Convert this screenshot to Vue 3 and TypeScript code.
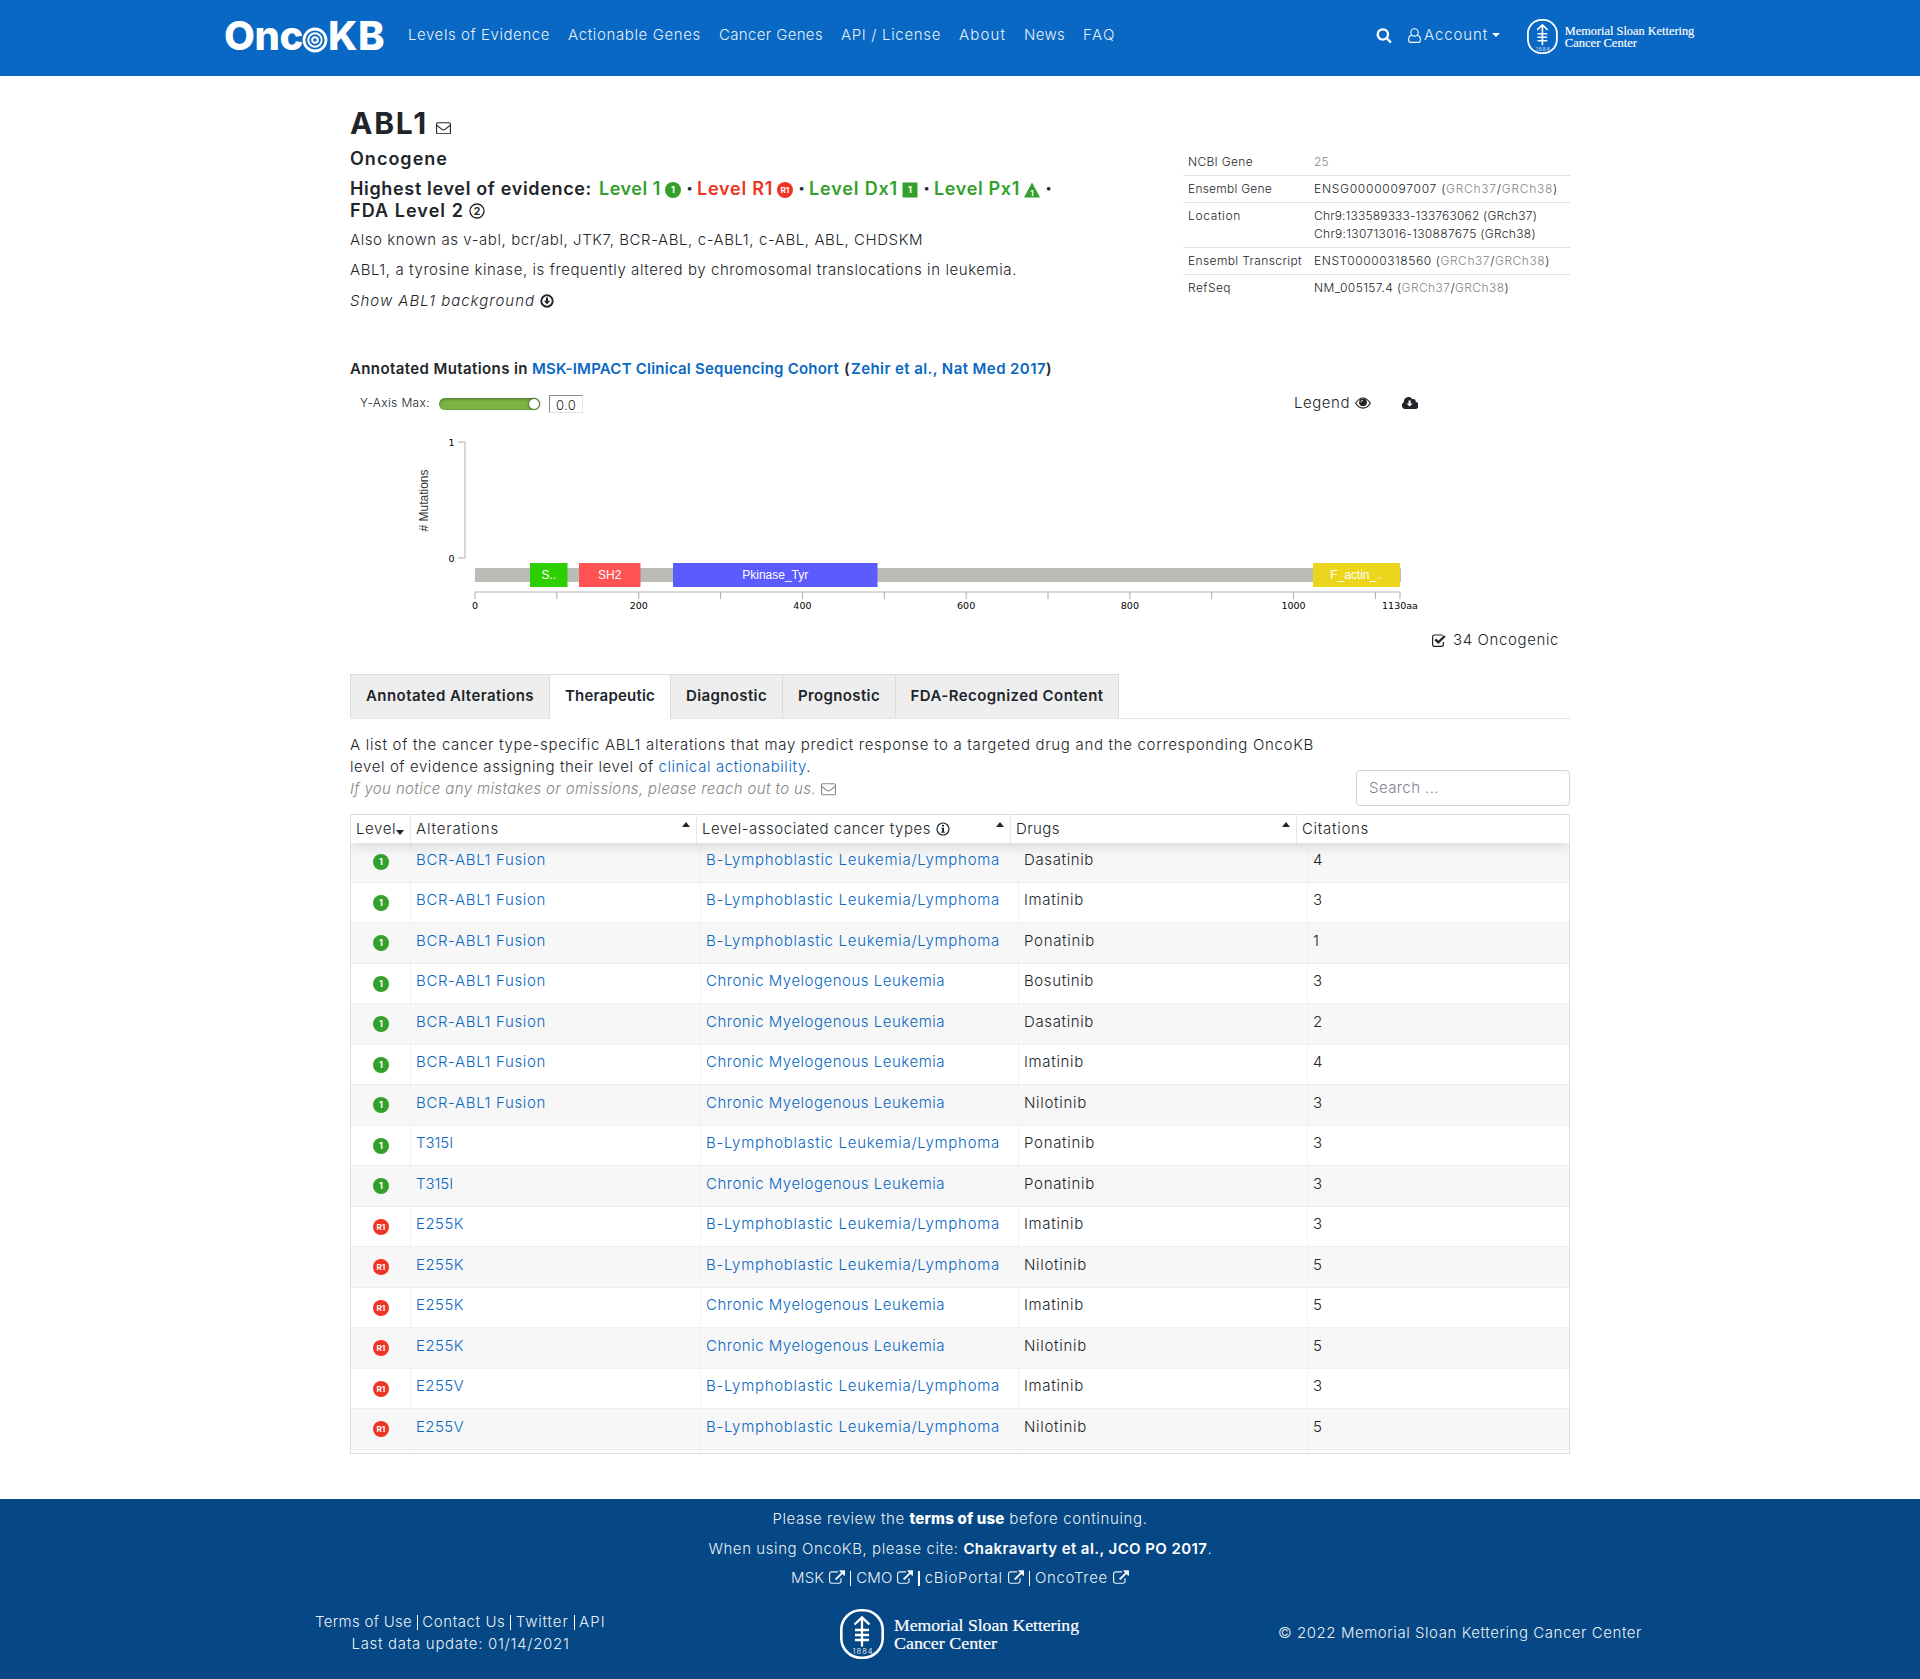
<script setup lang="ts">
import { h, type Directive, type FunctionalComponent } from 'vue'

interface Row {
  level: '1' | 'R1'
  alteration: string
  cancer: string
  drug: string
  citations: number
}

// Tracks a label out (or in) until it fills the given width.
const vFit: Directive<HTMLElement, number> = {
  mounted(el, { value }) {
    el.style.display = 'inline-block'
    el.style.whiteSpace = 'pre'
    const count = (el.textContent ?? '').length
    const natural = el.getBoundingClientRect().width
    el.style.letterSpacing = `${(value - natural) / count}px`
  },
}

const Envelope: FunctionalComponent = () =>
  h('svg', { viewBox: '0 0 16 13', width: 15, height: 12.5, fill: 'none', stroke: 'currentColor', 'stroke-width': 1.15 }, [
    h('rect', { x: 0.6, y: 0.6, width: 14.8, height: 11.8, rx: 1.4 }),
    h('path', { d: 'M.8 3.2c2 1.9 3.700 3 5.300 4.400 1.400 1.100 2.400 1.100 3.800 0 1.600-1.400 3.300-2.500 5.300-4.400' }),
  ])

const Level: FunctionalComponent<{ kind: string }> = ({ kind }) => {
  const label = (x: number, y: number, size: number, text: string, fill = '#fff') =>
    h('text', { x, y, 'font-size': size, 'font-weight': 700, fill, 'text-anchor': 'middle', 'font-family': 'Inter, sans-serif' }, text)
  const shapes: Record<string, unknown[]> = {
    '1': [h('circle', { cx: 8, cy: 8, r: 8, fill: '#33a02c' }), label(8, 11.2, 9, '1')],
    R1: [h('circle', { cx: 8, cy: 8, r: 8, fill: '#ee3424' }), label(7.9, 11, 8.2, 'R1')],
    Dx: [h('rect', { x: 0.5, y: 0.5, width: 15, height: 15, fill: '#33a02c' }), label(8, 11.2, 9, '1')],
    Px: [h('path', { d: 'M8 0.500 16 15.500H0Z', fill: '#33a02c' }), label(8, 13.5, 8, '1')],
    F2: [h('circle', { cx: 8, cy: 8, r: 7, fill: 'none', stroke: '#212529', 'stroke-width': 1.3 }), label(8, 11.8, 10.5, '2', '#212529')],
  }
  return h('svg', { viewBox: '0 0 16 16', width: 16, height: 16 }, shapes[kind] as any)
}

const External: FunctionalComponent = () =>
  h('svg', { viewBox: '0 0 1792 1540', width: 16, height: 14, fill: 'currentColor', class: 'external' }, [
    h('path', {
      d: 'M1408 928v320q0 119-84.500 203.500T1120 1536H288q-119 0-203.500-84.500T0 1248V416q0-119 84.500-203.500T288 128h704q14 0 23 9t9 23v64q0 14-9 23t-23 9H288q-66 0-113 47t-47 113v832q0 66 47 113t113 47h832q66 0 113-47t47-113V928q0-14 9-23t23-9h64q14 0 23 9t9 23zm384-864v512q0 26-19 45t-45 19-45-19l-176-176-652 652q-10 10-23 10t-23-10L695 983q-10-10-10-23t10-23l652-652-176-176q-19-19-19-45t19-45 45-19h512q26 0 45 19t19 45z',
    }),
  ])

const MskLogo: FunctionalComponent<{ width: number; height: number }> = ({ width, height }) =>
  h('svg', { viewBox: '0 0 240 50', width, height }, [
    h('rect', { x: 1.3, y: 1.3, width: 41.4, height: 47.4, rx: 19.5, fill: 'none', stroke: '#fff', 'stroke-width': 2.6 }),
    h('path', {
      d: 'M22 8V37.500M14.500 15.500 22 8.300 29.500 15.500M15 21h14M15 26h14M15 31h14',
      fill: 'none', stroke: '#fff', 'stroke-width': 2.3,
    }),
    h('text', { x: 12.5, y: 45, 'font-size': 7.5, fill: '#fff', 'font-family': 'Inter, sans-serif', textLength: 20 }, '1884'),
    h('text', { x: 54, y: 22.4, 'font-size': 17, fill: '#fff', stroke: '#fff', 'stroke-width': 0.2, 'font-family': '"Liberation Serif", serif', textLength: 185, lengthAdjust: 'spacingAndGlyphs' }, 'Memorial Sloan Kettering'),
    h('text', { x: 54, y: 40.2, 'font-size': 17, fill: '#fff', stroke: '#fff', 'stroke-width': 0.2, 'font-family': '"Liberation Serif", serif', textLength: 103, lengthAdjust: 'spacingAndGlyphs' }, 'Cancer Center'),
  ])

const nav = [
  { text: 'Levels of Evidence', w: 142 },
  { text: 'Actionable Genes', w: 133 },
  { text: 'Cancer Genes', w: 104 },
  { text: 'API / License', w: 100 },
  { text: 'About', w: 47 },
  { text: 'News', w: 41 },
  { text: 'FAQ', w: 33 },
]

const tabs = [
  { text: 'Annotated Alterations', w: 168, box: 198 },
  { text: 'Therapeutic', w: 90, box: 121 },
  { text: 'Diagnostic', w: 81, box: 112 },
  { text: 'Prognostic', w: 82, box: 113 },
  { text: 'FDA-Recognized Content', w: 193, box: 223 },
]

const B = 'B-Lymphoblastic Leukemia/Lymphoma'
const C = 'Chronic Myelogenous Leukemia'
const fusion = 'BCR-ABL1 Fusion'
const row = (level: '1' | 'R1', alteration: string, cancer: string, drug: string, citations: number): Row =>
  ({ level, alteration, cancer, drug, citations })

const rows: Row[] = [
  row('1', fusion, B, 'Dasatinib', 4),
  row('1', fusion, B, 'Imatinib', 3),
  row('1', fusion, B, 'Ponatinib', 1),
  row('1', fusion, C, 'Bosutinib', 3),
  row('1', fusion, C, 'Dasatinib', 2),
  row('1', fusion, C, 'Imatinib', 4),
  row('1', fusion, C, 'Nilotinib', 3),
  row('1', 'T315I', B, 'Ponatinib', 3),
  row('1', 'T315I', C, 'Ponatinib', 3),
  row('R1', 'E255K', B, 'Imatinib', 3),
  row('R1', 'E255K', B, 'Nilotinib', 5),
  row('R1', 'E255K', C, 'Imatinib', 5),
  row('R1', 'E255K', C, 'Nilotinib', 5),
  row('R1', 'E255V', B, 'Imatinib', 3),
  row('R1', 'E255V', B, 'Nilotinib', 5),
]

const widths: Record<string, number> = {
  [B]: 294, [C]: 239, [fusion]: 130, T315I: 37, E255K: 48, E255V: 48,
  Dasatinib: 70, Imatinib: 60, Ponatinib: 71, Bosutinib: 70, Nilotinib: 63,
}

const scale = 925 / 1130
const px = (aa: number) => 125 + aa * scale
const ticks = [0, 100, 200, 300, 400, 500, 600, 700, 800, 900, 1000, 1100, 1130]
const tickLabels = [0, 200, 400, 600, 800, 1000, 1130]
const domains = [
  { x: 180, w: 37.5, label: 'S..', fill: '#2dcf00' },
  { x: 229, w: 61.5, label: 'SH2', fill: '#ff5353' },
  { x: 323, w: 204.5, label: 'Pkinase_Tyr', fill: '#5b5bff' },
  { x: 963, w: 87, label: 'F_actin_..', fill: '#ebd61d' },
]
</script>

<template>
  <div class="page">
    <header class="top">
      <div class="brand">
        <span v-fit="79">Onc</span>
        <svg width="26" height="26" viewBox="0 0 26 26" fill="none" stroke="#fff">
          <circle cx="13" cy="13" r="11" stroke-width="2.800" />
          <circle cx="13" cy="13" r="6.700" stroke-width="2" />
          <circle cx="13" cy="13" r="2.800" stroke-width="2" />
        </svg>
        <span v-fit="57">KB</span>
      </div>
      <nav>
        <a v-for="n in nav" :key="n.text"><span v-fit="n.w">{{ n.text }}</span></a>
      </nav>
      <div class="account">
        <svg class="search-icon" width="16" height="16" viewBox="0 0 1792 1792" fill="#fff">
          <path d="M1216 832q0-185-131.500-316.500T768 384 451.500 515.500 320 832t131.500 316.500T768 1280t316.500-131.500T1216 832zm512 832q0 52-38 90t-90 38q-54 0-90-38l-343-342q-179 124-399 124-143 0-273.500-55.500t-225-150-150-225T64 832t55.500-273.500 150-225 225-150T768 128t273.500 55.500 225 150 150 225T1472 832q0 220-124 399l343 343q37 37 37 90z" />
        </svg>
        <svg class="user-icon" width="13" height="15" viewBox="0 0 13 15" fill="none" stroke="#fff" stroke-width="1.100">
          <path d="M3.600 7.200C1.500 7.500.6 9.500.6 12c0 1.500.8 2.400 2 2.400h7.800c1.200 0 2-.9 2-2.400 0-2.500-.9-4.500-3-4.800" />
          <circle cx="6.500" cy="4.400" r="3.700" />
        </svg>
        <span v-fit="64">Account</span>
        <i class="caret"></i>
      </div>
      <MskLogo :width="168" :height="35" />
    </header>

    <main>
      <section class="gene">
        <div class="info">
          <h1><span v-fit="78">ABL1</span><Envelope /></h1>
          <div class="h5"><span v-fit="98">Oncogene</span></div>
          <div class="h5 levels">
            <span class="lead" v-fit="242">Highest level of evidence:</span>
            <span class="green" v-fit="62">Level 1</span><Level kind="1" /><b>·</b>
            <span class="red" v-fit="76">Level R1</span><Level kind="R1" /><b>·</b>
            <span class="green" v-fit="89">Level Dx1</span><Level kind="Dx" /><b>·</b>
            <span class="green" v-fit="86">Level Px1</span><Level kind="Px" /><b>·</b>
          </div>
          <div class="h5 levels fda"><span v-fit="114">FDA Level 2</span><Level kind="F2" /></div>
          <p><span v-fit="573">Also known as v-abl, bcr/abl, JTK7, BCR-ABL, c-ABL1, c-ABL, ABL, CHDSKM</span></p>
          <p><span v-fit="667">ABL1, a tyrosine kinase, is frequently altered by chromosomal translocations in leukemia.</span></p>
          <p class="show">
            <em v-fit="185">Show ABL1 background</em>
            <svg width="14" height="14" viewBox="0 0 14 14">
              <circle cx="7" cy="7" r="5.700" fill="none" stroke="#212529" stroke-width="1.900" />
              <path d="M6 3.500h2v3.300h2.200L7 10.400 3.800 6.800H6z" fill="#212529" />
            </svg>
          </p>
        </div>
        <table class="refs">
          <tbody>
            <tr><td><span v-fit="65">NCBI Gene</span></td><td><a v-fit="15">25</a></td></tr>
            <tr><td><span v-fit="84">Ensembl Gene</span></td><td><span v-fit="244">ENSG00000097007 (<a>GRCh37</a>/<a>GRCh38</a>)</span></td></tr>
            <tr>
              <td><span v-fit="53">Location</span></td>
              <td><span v-fit="223">Chr9:133589333-133763062 (GRch37)</span><br /><span v-fit="222">Chr9:130713016-130887675 (GRch38)</span></td>
            </tr>
            <tr><td><span v-fit="114">Ensembl Transcript</span></td><td><span v-fit="236">ENST00000318560 (<a>GRCh37</a>/<a>GRCh38</a>)</span></td></tr>
            <tr><td><span v-fit="43">RefSeq</span></td><td><span v-fit="195">NM_005157.4 (<a>GRCh37</a>/<a>GRCh38</a>)</span></td></tr>
          </tbody>
        </table>
      </section>

      <h2 class="cohort"><span v-fit="182">Annotated Mutations in </span><a v-fit="307">MSK-IMPACT Clinical Sequencing Cohort</a><span v-fit="12"> (</span><a v-fit="195">Zehir et al., Nat Med 2017</a><span>)</span></h2>

      <div class="controls">
        <span class="small" v-fit="70">Y-Axis Max:</span>
        <span class="slider"><i></i></span>
        <span class="number"><span v-fit="20">0.0</span></span>
        <span class="legend" v-fit="56">Legend</span>
        <svg width="16" height="12" viewBox="0 0 16 12">
          <path d="M.7 6.300Q3.800 1 8 1t7.300 5.300Q12.200 11.200 8 11.200T.7 6.300Z" fill="none" stroke="#212529" stroke-width="1.200" />
          <circle cx="8" cy="5.300" r="3.900" fill="#212529" />
          <path d="M5.900 5.300A2.100 2.100 0 0 1 8 3.200" fill="none" stroke="#fff" stroke-width=".8" />
        </svg>
        <svg class="cloud" width="16" height="12" viewBox="0 0 16 12">
          <path d="M3.600 12A3.600 3.600 0 0 1 2.100 5.100 4.400 4.400 0 0 1 10.300 2.300 2.300 2.300 0 0 1 13.600 5 3.500 3.500 0 0 1 12.700 12Z" fill="#212529" />
          <path d="M6.600 3.500h2v3h2L7.600 9.600 4.600 6.500h2z" fill="#fff" />
        </svg>
      </div>

      <svg class="chart" width="1220" height="200" viewBox="0 420 1220 200">
        <path d="M108 442h7v116h-7" fill="none" stroke="#ccc" stroke-width="1.500" />
        <g class="tick">
          <text x="104.500" y="446" text-anchor="end">1</text>
          <text x="104.500" y="562" text-anchor="end">0</text>
        </g>
        <text class="axis" transform="translate(78 500.500) rotate(-90)" text-anchor="middle">
          # Mutations
        </text>
        <rect x="125" y="568" width="926" height="14" fill="#babdb6" />
        <g v-for="d in domains" :key="d.label">
          <rect :x="d.x" y="563" :width="d.w" height="24" :fill="d.fill" />
          <text class="domain" :x="d.x + d.w / 2" y="579" text-anchor="middle">{{ d.label }}</text>
        </g>
        <path d="M125 592H1050" stroke="#ccc" stroke-width="1.500" />
        <path v-for="t in ticks" :key="t" :d="`M${px(t)} 592v7`" stroke="#aaa" />
        <g class="tick">
          <text v-for="t in tickLabels" :key="t" :x="px(t)" y="609" text-anchor="middle">{{ t === 1130 ? '1130aa' : t }}</text>
        </g>
      </svg>

      <div class="oncogenic">
        <svg width="15" height="13" viewBox="0 0 15 13" fill="none" stroke="#212529">
          <path d="M11.400 8v2.400a1.900 1.900 0 0 1-1.900 1.900h-7A1.900 1.900 0 0 1 .6 10.400v-7.500A1.900 1.900 0 0 1 2.500 1h7c.5 0 .9.100 1.200.4" stroke-width="1.200" />
          <path d="m3.300 5.300 3 3.100 6.500-6.400" stroke-width="2.400" />
        </svg>
        <span v-fit="106">34 Oncogenic</span>
      </div>

      <ul class="tabs">
        <li v-for="(t, i) in tabs" :key="t.text" :class="{ active: i === 1 }" :style="{ width: t.box + 'px' }">
          <span v-fit="t.w">{{ t.text }}</span>
        </li>
      </ul>

      <div class="intro">
        <div class="copy">
          <div><span v-fit="964">A list of the cancer type-specific ABL1 alterations that may predict response to a targeted drug and the corresponding OncoKB</span></div>
          <div><span v-fit="461">level of evidence assigning their level of <a>clinical actionability</a>.</span></div>
          <div class="note"><em v-fit="466">If you notice any mistakes or omissions, please reach out to us.</em><Envelope /></div>
        </div>
        <div class="search"><span v-fit="70">Search ...</span></div>
      </div>

      <div class="grid">
        <div class="head">
          <div class="c1"><span v-fit="40">Level</span><i class="down"></i></div>
          <div class="c2"><span v-fit="83">Alterations</span><i class="up"></i></div>
          <div class="c3">
            <span v-fit="229">Level-associated cancer types</span>
            <svg width="14" height="14" viewBox="0 0 14 14">
              <circle cx="7" cy="7" r="6" fill="none" stroke="#212529" stroke-width="1.200" />
              <path d="M6 2.900h2v1.600H6zM5.400 5.700H8v4h.8v1H5.300v-1h.8v-3h-.7z" fill="#212529" />
            </svg>
            <i class="up"></i>
          </div>
          <div class="c4"><span v-fit="44">Drugs</span><i class="up"></i></div>
          <div class="c5"><span v-fit="67">Citations</span></div>
        </div>
        <div class="body">
          <div v-for="(r, i) in rows" :key="i" class="row">
            <div class="b1"><Level :kind="r.level" /></div>
            <div class="b2"><a v-fit="widths[r.alteration]">{{ r.alteration }}</a></div>
            <div class="b3"><a v-fit="widths[r.cancer]">{{ r.cancer }}</a></div>
            <div class="b4"><span v-fit="widths[r.drug]">{{ r.drug }}</span></div>
            <div class="b5">{{ r.citations }}</div>
          </div>
          <div class="row rest"><div class="b1"></div><div class="b2"></div><div class="b3"></div><div class="b4"></div><div class="b5"></div></div>
        </div>
      </div>
    </main>

    <footer>
      <div class="line"><span v-fit="137">Please review the </span><b class="heavy" v-fit="95">terms of use</b><span v-fit="143"> before continuing.</span></div>
      <div class="line"><span v-fit="255">When using OncoKB, please cite: </span><b v-fit="244">Chakravarty et al., JCO PO 2017</b><span>.</span></div>
      <div class="line links">
        <span v-fit="33">MSK</span><External /><i></i>
        <span v-fit="36">CMO</span><External /><i></i>
        <span v-fit="78">cBioPortal</span><External /><i></i>
        <span v-fit="73">OncoTree</span><External />
      </div>
      <div class="bottom">
        <div class="left">
          <div class="links">
            <span v-fit="97">Terms of Use</span><i></i><span v-fit="83">Contact Us</span><i></i><span v-fit="53">Twitter</span><i></i><span v-fit="27">API</span>
          </div>
          <div><span v-fit="218">Last data update: 01/14/2021</span></div>
        </div>
        <MskLogo :width="240" :height="50" />
        <div class="right"><span v-fit="364">© 2022 Memorial Sloan Kettering Cancer Center</span></div>
      </div>
    </footer>
  </div>
</template>

<style>
body {
  margin: 0;
  background: #fff;
}
</style>

<style scoped>
.page {
  width: 1920px;
  height: 1679px;
  display: flex;
  flex-direction: column;
  overflow: hidden;
  font: 350 15px/22px Inter, sans-serif;
  color: #212529;
}
svg {
  display: block;
  flex: none;
}
a {
  color: #0968c3;
}
.top {
  box-sizing: border-box;
  height: 76px;
  padding-left: 224px;
  display: flex;
  align-items: flex-start;
  background: #0968c3;
  color: rgba(255, 255, 255, 0.92);
}
.top a {
  color: inherit;
}
.brand {
  display: flex;
  width: 184px;
  height: 76px;
  color: #fff;
  font: 800 40px/48px Inter, sans-serif;
}
.brand > * {
  margin-top: 12px;
}
.brand svg {
  margin: 26.500px 0 0 -1px;
}
nav {
  display: flex;
  gap: 18px;
  width: 968px;
  margin-top: 24px;
}
.account {
  display: flex;
  width: 151px;
  margin-top: 24px;
}
.search-icon {
  margin: 2.500px 16px 0 0;
}
.user-icon {
  margin: 3.500px 3px 0 0;
}
.caret {
  margin: 8.500px 0 0 4px;
  height: 0;
  border: 4.500px solid transparent;
  border-top-color: #fff;
  border-bottom: 0;
}
.top > svg {
  margin-top: 19px;
}

main {
  width: 1220px;
  margin-left: 350px;
}
.gene {
  display: flex;
  justify-content: space-between;
  height: 282px;
}
h1 {
  display: flex;
  margin: 29px 0 6.500px;
  font: 700 30px/36px Inter, sans-serif;
}
h1 svg {
  margin: 16.500px 0 0 8px;
}
.h5 {
  height: 22px;
  font: 600 18px/22px Inter, sans-serif;
}
.levels {
  display: flex;
  margin-top: 8px;
}
.fda {
  margin-top: 0;
}
.levels svg {
  margin: 4.500px 0 0 4px;
}
.fda svg {
  margin: 3.500px 0 0 5px;
}
.lead {
  margin-right: 7px;
}
.levels b {
  width: 15px;
  margin-left: 1px;
  text-align: center;
}
.green {
  color: #33a02c;
}
.red {
  color: #ee3424;
}
p {
  margin: 7.500px 0 8px;
  height: 22px;
  display: flex;
}
p + p {
  margin-top: 8px;
}
.show {
  margin-top: 8.500px;
}
.show svg {
  margin: 4px 0 0 5px;
}
.refs {
  align-self: flex-start;
  width: 387px;
  margin: 73px 0 0;
  border-collapse: collapse;
  font-size: 12px;
  line-height: 18px;
}
.refs td {
  padding: 4px 5px;
  vertical-align: top;
}
.refs td:first-child {
  width: 116px;
}
.refs tr + tr {
  border-top: 1px solid #dee2e6;
}
.refs a {
  color: #868686;
}
.cohort {
  margin: 0;
  font: 600 15px/22px Inter, sans-serif;
}
.controls {
  display: flex;
  height: 28px;
  padding: 12px 0 0 10px;
}
.small {
  font-size: 12px;
}
.slider {
  width: 101px;
  height: 12px;
  margin: 6px 9px 0 9px;
  border-radius: 6px;
  background: #7cb342;
  box-shadow: inset 0 1px 3px rgba(0, 0, 0, 0.4);
  display: flex;
  justify-content: flex-end;
}
.slider i {
  width: 10px;
  height: 10px;
  margin: 1px;
  border-radius: 50%;
  background: #fff;
  box-shadow: 0 0 3px rgba(0, 0, 0, 0.7);
}
.number {
  box-sizing: border-box;
  width: 34px;
  height: 18px;
  margin: 3px 711px 0 0;
  padding-left: 6px;
  border: 1px solid;
  border-color: #8a8a8a #e4e4e4 #e4e4e4 #8a8a8a;
  font-size: 13px;
  line-height: 18px;
}
.legend {
  margin-right: 5px;
}
.controls svg {
  margin-top: 5px;
}
.controls .cloud {
  margin: 4.500px 0 0 31px;
}
.tick {
  font: 9.500px "DejaVu Sans", sans-serif;
}
.axis,
.domain {
  font: 12px "Liberation Sans", sans-serif;
  fill: #2e3436;
}
.domain {
  fill: #fff;
}
.oncogenic {
  display: flex;
  height: 45px;
  padding: 9px 0 0 1082px;
  gap: 6px;
}
.oncogenic svg {
  margin-top: 4.500px;
}
.tabs {
  display: flex;
  box-sizing: border-box;
  height: 45px;
  margin: 0;
  padding: 0;
  list-style: none;
  border-bottom: 1px solid #dee2e6;
}
.tabs li {
  box-sizing: border-box;
  height: 44px;
  padding-top: 10px;
  border: solid #dcdcdc;
  border-width: 1px 1px 0 0;
  background: #eee;
  font-weight: 600;
  text-align: center;
}
.tabs li:first-child {
  border-left-width: 1px;
  box-sizing: content-box;
  height: 33px;
}
.tabs li.active {
  height: 45px;
  background: #fff;
}
.intro {
  display: flex;
  justify-content: space-between;
  height: 95px;
}
.copy {
  padding-top: 14.500px;
}
.note {
  display: flex;
  margin-top: 0.500px;
  color: #868686;
}
.note svg {
  margin: 5px 0 0 5px;
}
.search {
  box-sizing: border-box;
  width: 214px;
  height: 36px;
  margin-top: 51px;
  padding: 5.500px 12px;
  border: 1px solid #ced4da;
  border-radius: 4px;
  color: #7b838a;
}
.grid {
  box-sizing: border-box;
  height: 640px;
  border: 1px solid #dedede;
  overflow: hidden;
}
.head {
  display: flex;
  height: 28px;
  position: relative;
  background: #fff;
  box-shadow: 0 2px 15px rgba(0, 0, 0, 0.15);
}
.head > div {
  box-sizing: border-box;
  display: flex;
  padding: 2.500px 6px 0 5px;
  border-right: 1px solid #e8e8e8;
}
.head .c1 { width: 60px; padding-right: 0; }
.head .c2 { width: 286px; }
.head .c3 { width: 314px; }
.head .c4 { width: 286px; }
.head .c5 { flex: 1; border: 0; }
.c3 svg {
  margin: 4px 0 0 5px;
}
.up,
.down {
  height: 0;
  border: 4.500px solid transparent;
}
.up {
  margin: 4px 0 0 auto;
  border-top: 0;
  border-bottom: 5px solid #212529;
}
.down {
  margin-top: 12.500px;
  border-bottom: 0;
  border-top: 5px solid #212529;
}
.body {
  margin-top: -1px;
}
.row {
  display: flex;
  box-sizing: border-box;
  height: 40.500px;
  border-bottom: 1px solid #efefef;
}
.row:nth-child(odd) {
  background: #f7f7f7;
}
.row > div {
  box-sizing: border-box;
  padding: 6.800px 5px 0;
  border-right: 1px solid #f2f2f2;
}
.row .b1 { width: 60px; padding: 12.200px 0 0 22px; }
.row .b2 { width: 290px; }
.row .b3 { width: 318px; }
.row .b4 { width: 289px; }
.row .b5 { flex: 1; border: 0; }
.row.rest {
  background: #fff;
}

footer {
  margin-top: auto;
  height: 180px;
  background: #064885;
  color: rgba(255, 255, 255, 0.93);
}
footer b {
  color: #fff;
  font-weight: 600;
}
footer .heavy {
  font-weight: 800;
}
.line {
  display: flex;
  justify-content: center;
  height: 22px;
  padding-top: 9px;
}
.line + .line {
  padding-top: 8px;
}
.line.links {
  padding-top: 7px;
}
.links {
  display: flex;
}
.links i {
  width: 1.300px;
  height: 15px;
  margin: 4px 5px 0;
  background: #fff;
}
.external {
  margin: 3px 0 0 5px;
}
.bottom {
  display: flex;
  padding-left: 315px;
  margin-top: 20px;
}
.left {
  width: 291px;
  margin-top: 1.500px;
  text-align: center;
}
.bottom > svg {
  margin: 0 198px 0 234px;
}
.right {
  margin-top: 13px;
}
</style>
